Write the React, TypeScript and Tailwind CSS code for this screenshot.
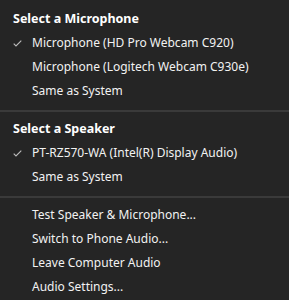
import { Fragment } from "react";

type Item = { label: string; checked?: boolean };

const sections: { title?: string; items: Item[] }[] = [
  {
    title: "Select a Microphone",
    items: [
      { label: "Microphone (HD Pro Webcam C920)", checked: true },
      { label: "Microphone (Logitech Webcam C930e)" },
      { label: "Same as System" },
    ],
  },
  {
    title: "Select a Speaker",
    items: [
      { label: "PT-RZ570-WA (Intel(R) Display Audio)", checked: true },
      { label: "Same as System" },
    ],
  },
  {
    items: [
      { label: "Test Speaker & Microphone..." },
      { label: "Switch to Phone Audio..." },
      { label: "Leave Computer Audio" },
      { label: "Audio Settings..." },
    ],
  },
];

function Check() {
  return (
    <svg width="9" height="7" viewBox="0 0 9 7" fill="none">
      <path d="M0.7 3.6 L3 5.9 L8.3 0.7" stroke="#bdbdbd" strokeWidth="1.1" />
    </svg>
  );
}

export default function App() {
  return (
    <div
      className="w-[289px] h-[300px] bg-[#252525] text-[#f2f2f2] text-[12px] overflow-hidden"
      style={{ fontFamily: '"Noto Sans", "Open Sans", sans-serif' }}
    >
      {sections.map((s, i) => (
        <Fragment key={i}>
          {i > 0 && <div className="h-[2px] bg-[#3a3a3a]" />}
          <div className={i === 0 ? "pt-[7px] pb-[7px]" : i === 1 ? "pt-[5px] pb-[7px]" : "pt-[5px]"}>
            {s.title && (
              <div className="h-[24px] flex items-center pl-[13px] font-bold text-[12.5px] text-white">
                {s.title}
              </div>
            )}
            {s.items.map((it) => (
              <div key={it.label} className="h-[24px] flex items-center">
                <div className="w-[32px] pl-[13px] flex items-center">
                  {it.checked && <Check />}
                </div>
                <span className="whitespace-nowrap">{it.label}</span>
              </div>
            ))}
          </div>
        </Fragment>
      ))}
    </div>
  );
}
